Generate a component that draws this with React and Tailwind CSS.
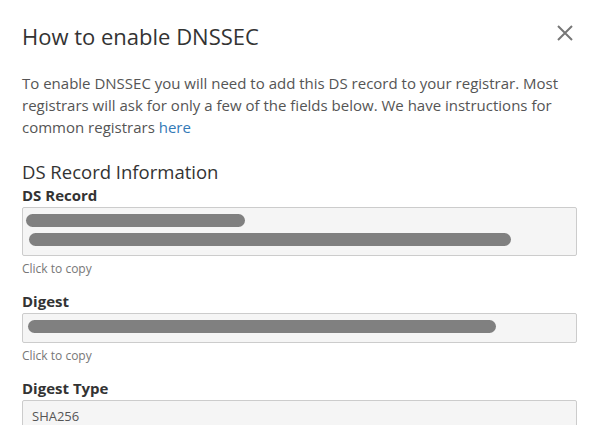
import React from "react";

const Redacted = ({ className }) => (
    <span className={"block h-[13px] rounded-full bg-[#808080] " + className} />
);

const Field = ({ label, children, hint, boxClass }) => (
    <div>
        <label className="block text-[15px] font-bold leading-[20px] text-[#333]">
            {label}
        </label>
        <div
            className={
                "mt-[2px] border border-[#ccc] rounded-[2px] bg-[#f5f5f5] text-[13px] text-[#555] " +
                boxClass
            }
        >
            {children}
        </div>
        {hint && (
            <p className="mt-[4px] text-[12px] leading-[17px] text-[#777]">
                {hint}
            </p>
        )}
    </div>
);

export default function App() {
    return (
        <div
            className="w-[593px] h-[425px] overflow-hidden bg-white"
            style={{ fontFamily: '"Open Sans", "Noto Sans", sans-serif' }}
        >
            {/* Header */}
            <div className="flex items-start justify-between pl-[22px] pr-[20px] pt-[20px]">
                <h2 className="text-[22px] leading-[32px] font-normal text-[#333]">
                    How to enable DNSSEC
                </h2>
                <button type="button" className="mt-[5px]">
                    <svg width="16" height="16" viewBox="0 0 16 16">
                        <path
                            d="M1 1 L15 15 M15 1 L1 15"
                            stroke="#777"
                            strokeWidth="2"
                            fill="none"
                        />
                    </svg>
                </button>
            </div>

            {/* Body */}
            <div className="pl-[22px] pr-[16px] pt-[20px]">
                <p className="text-[15px] leading-[22px] text-[#555]">
                    To enable DNSSEC you will need to add this DS record to
                    your registrar. Most registrars will ask for only a few of
                    the fields below. We have instructions for common
                    registrars <a className="text-[#337ab7]">here</a>
                </p>

                <h3 className="mt-[22px] text-[18.5px] leading-[24px] text-[#333]">
                    DS Record Information
                </h3>

                <div className="mt-[1px] flex flex-col gap-[14px]">
                    <Field
                        label="DS Record"
                        hint="Click to copy"
                        boxClass="h-[49px] pt-[6px] pl-[3px]"
                    >
                        <Redacted className="w-[219px]" />
                        <Redacted className="w-[482px] mt-[6px] ml-[3px]" />
                    </Field>

                    <Field
                        label="Digest"
                        hint="Click to copy"
                        boxClass="h-[30px] pt-[6px] pl-[5px]"
                    >
                        <Redacted className="w-[468px]" />
                    </Field>

                    <Field
                        label="Digest Type"
                        boxClass="h-[30px] px-[9px] pt-[1px] leading-[28px]"
                    >
                        SHA256
                    </Field>
                </div>
            </div>
        </div>
    );
}
